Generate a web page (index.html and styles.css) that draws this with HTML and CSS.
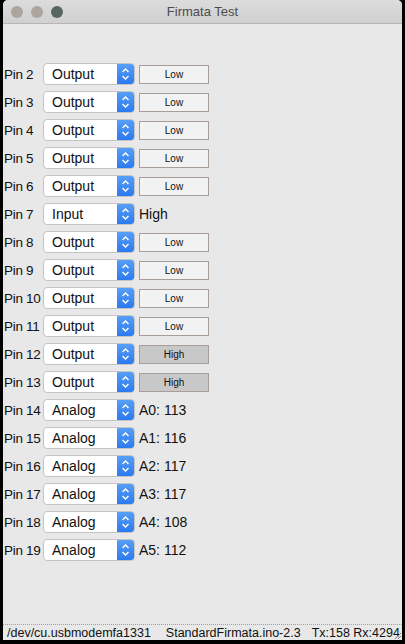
FILE: index.html
```html
<!DOCTYPE html>
<html>
<head>
<meta charset="utf-8">
<link rel="stylesheet" href="styles.css">
</head>
<body>
<div class="window">
  <div class="titlebar">
    <div class="lights">
      <span class="light gray"></span>
      <span class="light gray"></span>
      <span class="light dark"></span>
    </div>
    <div class="title">Firmata Test</div>
  </div>
  <div class="content">
    <div class="row"><span class="pin">Pin 2</span><div class="select"><span class="val">Output</span><span class="arrow"><svg viewBox="0 0 17 22" width="17" height="22"><path d="M5.5 9 L8.5 6 L11.5 9 M5.5 13 L8.5 16 L11.5 13" fill="none" stroke="#fff" stroke-width="1.4"/></svg></span></div><div class="btn">Low</div></div>
    <div class="row"><span class="pin">Pin 3</span><div class="select"><span class="val">Output</span><span class="arrow"><svg viewBox="0 0 17 22" width="17" height="22"><path d="M5.5 9 L8.5 6 L11.5 9 M5.5 13 L8.5 16 L11.5 13" fill="none" stroke="#fff" stroke-width="1.4"/></svg></span></div><div class="btn">Low</div></div>
    <div class="row"><span class="pin">Pin 4</span><div class="select"><span class="val">Output</span><span class="arrow"><svg viewBox="0 0 17 22" width="17" height="22"><path d="M5.5 9 L8.5 6 L11.5 9 M5.5 13 L8.5 16 L11.5 13" fill="none" stroke="#fff" stroke-width="1.4"/></svg></span></div><div class="btn">Low</div></div>
    <div class="row"><span class="pin">Pin 5</span><div class="select"><span class="val">Output</span><span class="arrow"><svg viewBox="0 0 17 22" width="17" height="22"><path d="M5.5 9 L8.5 6 L11.5 9 M5.5 13 L8.5 16 L11.5 13" fill="none" stroke="#fff" stroke-width="1.4"/></svg></span></div><div class="btn">Low</div></div>
    <div class="row"><span class="pin">Pin 6</span><div class="select"><span class="val">Output</span><span class="arrow"><svg viewBox="0 0 17 22" width="17" height="22"><path d="M5.5 9 L8.5 6 L11.5 9 M5.5 13 L8.5 16 L11.5 13" fill="none" stroke="#fff" stroke-width="1.4"/></svg></span></div><div class="btn">Low</div></div>
    <div class="row"><span class="pin">Pin 7</span><div class="select"><span class="val">Input</span><span class="arrow"><svg viewBox="0 0 17 22" width="17" height="22"><path d="M5.5 9 L8.5 6 L11.5 9 M5.5 13 L8.5 16 L11.5 13" fill="none" stroke="#fff" stroke-width="1.4"/></svg></span></div><span class="reading">High</span></div>
    <div class="row"><span class="pin">Pin 8</span><div class="select"><span class="val">Output</span><span class="arrow"><svg viewBox="0 0 17 22" width="17" height="22"><path d="M5.5 9 L8.5 6 L11.5 9 M5.5 13 L8.5 16 L11.5 13" fill="none" stroke="#fff" stroke-width="1.4"/></svg></span></div><div class="btn">Low</div></div>
    <div class="row"><span class="pin">Pin 9</span><div class="select"><span class="val">Output</span><span class="arrow"><svg viewBox="0 0 17 22" width="17" height="22"><path d="M5.5 9 L8.5 6 L11.5 9 M5.5 13 L8.5 16 L11.5 13" fill="none" stroke="#fff" stroke-width="1.4"/></svg></span></div><div class="btn">Low</div></div>
    <div class="row"><span class="pin">Pin 10</span><div class="select"><span class="val">Output</span><span class="arrow"><svg viewBox="0 0 17 22" width="17" height="22"><path d="M5.5 9 L8.5 6 L11.5 9 M5.5 13 L8.5 16 L11.5 13" fill="none" stroke="#fff" stroke-width="1.4"/></svg></span></div><div class="btn">Low</div></div>
    <div class="row"><span class="pin">Pin 11</span><div class="select"><span class="val">Output</span><span class="arrow"><svg viewBox="0 0 17 22" width="17" height="22"><path d="M5.5 9 L8.5 6 L11.5 9 M5.5 13 L8.5 16 L11.5 13" fill="none" stroke="#fff" stroke-width="1.4"/></svg></span></div><div class="btn">Low</div></div>
    <div class="row"><span class="pin">Pin 12</span><div class="select"><span class="val">Output</span><span class="arrow"><svg viewBox="0 0 17 22" width="17" height="22"><path d="M5.5 9 L8.5 6 L11.5 9 M5.5 13 L8.5 16 L11.5 13" fill="none" stroke="#fff" stroke-width="1.4"/></svg></span></div><div class="btn on">High</div></div>
    <div class="row"><span class="pin">Pin 13</span><div class="select"><span class="val">Output</span><span class="arrow"><svg viewBox="0 0 17 22" width="17" height="22"><path d="M5.5 9 L8.5 6 L11.5 9 M5.5 13 L8.5 16 L11.5 13" fill="none" stroke="#fff" stroke-width="1.4"/></svg></span></div><div class="btn on">High</div></div>
    <div class="row"><span class="pin">Pin 14</span><div class="select"><span class="val">Analog</span><span class="arrow"><svg viewBox="0 0 17 22" width="17" height="22"><path d="M5.5 9 L8.5 6 L11.5 9 M5.5 13 L8.5 16 L11.5 13" fill="none" stroke="#fff" stroke-width="1.4"/></svg></span></div><span class="reading">A0: 113</span></div>
    <div class="row"><span class="pin">Pin 15</span><div class="select"><span class="val">Analog</span><span class="arrow"><svg viewBox="0 0 17 22" width="17" height="22"><path d="M5.5 9 L8.5 6 L11.5 9 M5.5 13 L8.5 16 L11.5 13" fill="none" stroke="#fff" stroke-width="1.4"/></svg></span></div><span class="reading">A1: 116</span></div>
    <div class="row"><span class="pin">Pin 16</span><div class="select"><span class="val">Analog</span><span class="arrow"><svg viewBox="0 0 17 22" width="17" height="22"><path d="M5.5 9 L8.5 6 L11.5 9 M5.5 13 L8.5 16 L11.5 13" fill="none" stroke="#fff" stroke-width="1.4"/></svg></span></div><span class="reading">A2: 117</span></div>
    <div class="row"><span class="pin">Pin 17</span><div class="select"><span class="val">Analog</span><span class="arrow"><svg viewBox="0 0 17 22" width="17" height="22"><path d="M5.5 9 L8.5 6 L11.5 9 M5.5 13 L8.5 16 L11.5 13" fill="none" stroke="#fff" stroke-width="1.4"/></svg></span></div><span class="reading">A3: 117</span></div>
    <div class="row"><span class="pin">Pin 18</span><div class="select"><span class="val">Analog</span><span class="arrow"><svg viewBox="0 0 17 22" width="17" height="22"><path d="M5.5 9 L8.5 6 L11.5 9 M5.5 13 L8.5 16 L11.5 13" fill="none" stroke="#fff" stroke-width="1.4"/></svg></span></div><span class="reading">A4: 108</span></div>
    <div class="row"><span class="pin">Pin 19</span><div class="select"><span class="val">Analog</span><span class="arrow"><svg viewBox="0 0 17 22" width="17" height="22"><path d="M5.5 9 L8.5 6 L11.5 9 M5.5 13 L8.5 16 L11.5 13" fill="none" stroke="#fff" stroke-width="1.4"/></svg></span></div><span class="reading">A5: 112</span></div>
  </div>
  <div class="status">
    <span class="port">/dev/cu.usbmodemfa1331</span>
    <span class="fw">StandardFirmata.ino-2.3</span>
    <span class="txrx">Tx:158 Rx:4294</span>
    <svg class="grip" width="10" height="10" viewBox="0 0 10 10"><path d="M9 3 L3 9 M9 6 L6 9" stroke="#888" stroke-width="1"/></svg>
  </div>
</div>
</body>
</html>
```
FILE: styles.css
```css
html, body {
  margin: 0;
  padding: 0;
  background: #000;
  width: 405px;
  height: 644px;
  overflow: hidden;
}
.window {
  margin: 0 3px;
  height: 640px;
  background: #e8e8e8;
  border-radius: 5px 5px 0 0;
  display: flex;
  flex-direction: column;
  overflow: hidden;
  font-family: "Liberation Sans", Arial, sans-serif;
  color: #111;
}
.titlebar {
  height: 23px;
  flex: none;
  background: linear-gradient(#dcdcdc, #d0d0d0);
  border-bottom: 1px solid #b4b4b4;
  position: relative;
  display: flex;
  align-items: center;
}
.lights {
  display: flex;
  gap: 8px;
  padding-left: 8px;
}
.light {
  width: 12px;
  height: 12px;
  border-radius: 50%;
}
.light.gray { background: #aca59e; }
.light.dark { background: #586663; }
.title {
  position: absolute;
  left: 0;
  right: 0;
  top: 0;
  line-height: 23px;
  text-align: center;
  font-size: 13px;
  color: #4c4c4c;
}
.content {
  flex: 1;
  padding-top: 36px;
}
.row {
  height: 28px;
  display: flex;
  align-items: center;
}
.pin {
  width: 39px;
  padding-left: 1px;
  font-size: 13.5px;
  letter-spacing: -0.3px;
  white-space: nowrap;
  flex: none;
}
.select {
  width: 92px;
  height: 22px;
  box-sizing: border-box;
  border: 1px solid #c4c4c4;
  border-radius: 4px;
  background: #fff;
  display: flex;
  align-items: center;
  overflow: hidden;
  flex: none;
}
.val {
  flex: 1;
  padding-left: 8px;
  font-size: 14px;
  color: #111;
}
.arrow {
  width: 17px;
  height: 22px;
  background: linear-gradient(#5aa0f7, #2a78ef);
  display: flex;
  align-items: center;
  justify-content: center;
}
.arrow svg { display: block; }
.btn {
  margin-left: 4px;
  width: 70px;
  height: 19px;
  box-sizing: border-box;
  border: 1px solid #a89e97;
  background: #f2f2f2;
  font-size: 10px;
  color: #111;
  display: flex;
  align-items: center;
  justify-content: center;
}
.btn.on {
  background: #c8c8c8;
}
.reading {
  margin-left: 4px;
  font-size: 14px;
}
.status {
  height: 15px;
  flex: none;
  border-top: 1px dotted #a0a0a0;
  display: flex;
  align-items: flex-end;
  font-size: 12.5px;
  line-height: 14px;
  color: #111;
  padding-left: 4px;
  position: relative;
  white-space: nowrap;
}
.fw { margin-left: 15px; }
.txrx { margin-left: 11px; }
.grip {
  position: absolute;
  right: 0;
  bottom: 0;
}
```
